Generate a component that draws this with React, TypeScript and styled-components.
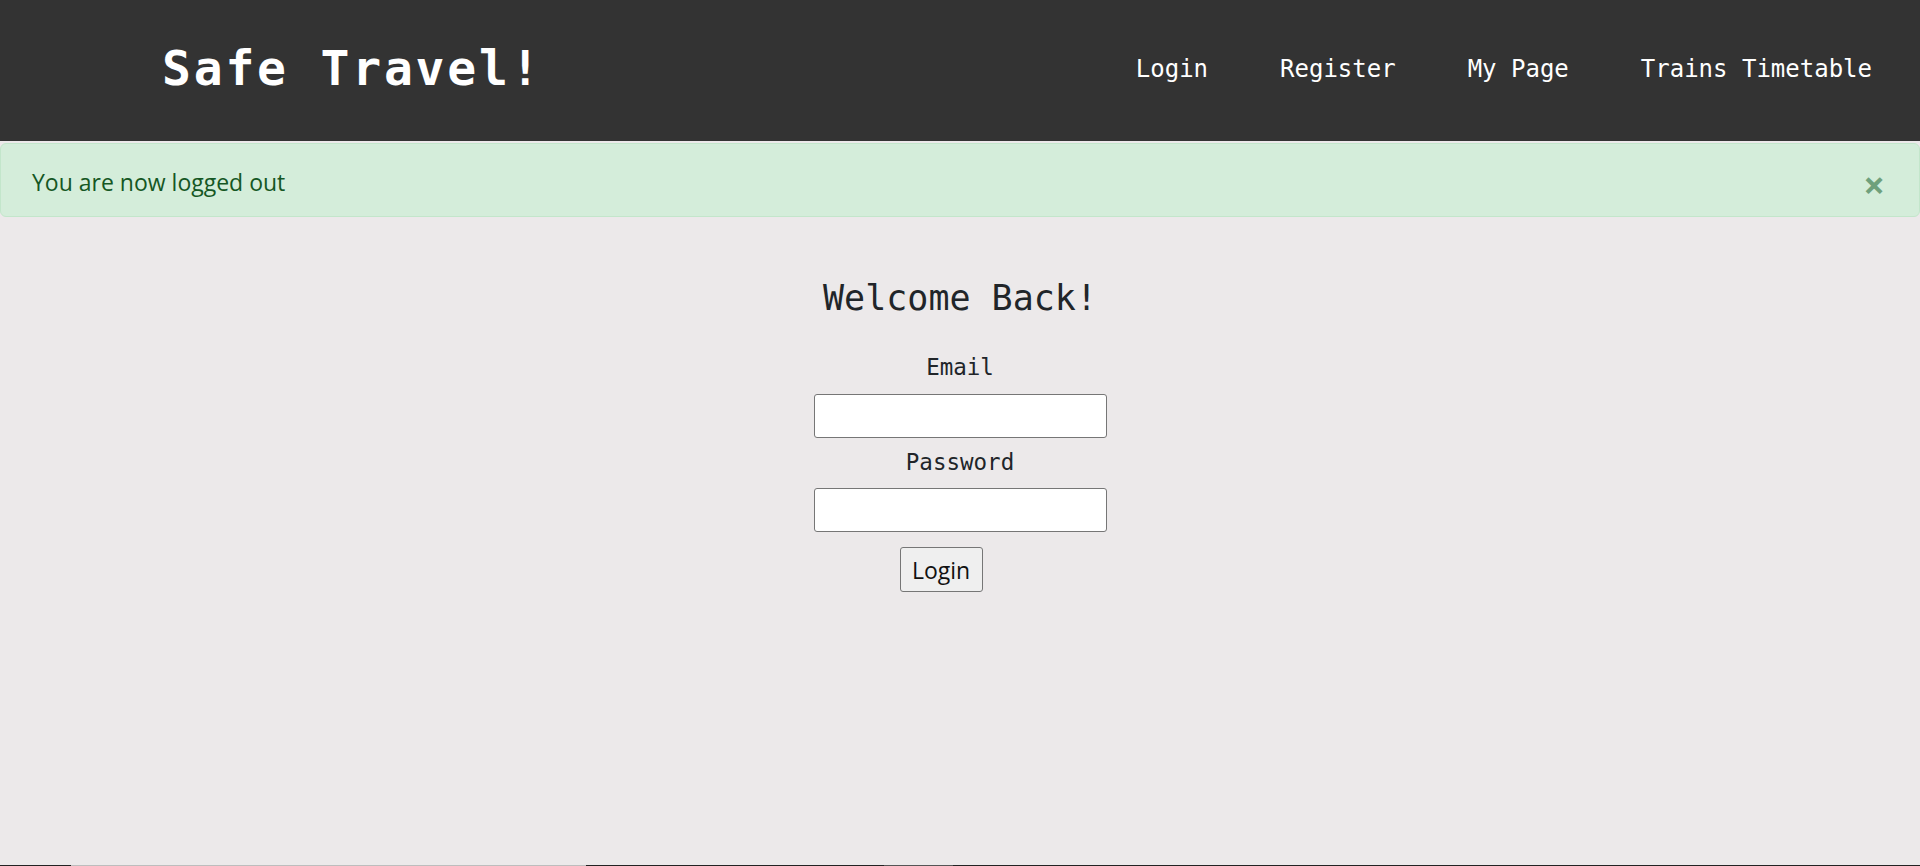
import React from "react";
import styled, { createGlobalStyle } from "styled-components";

const Global = createGlobalStyle`
  html, body { margin: 0; padding: 0; }
  body {
    background: #ecE9ea;
    font-family: "Open Sans", "Noto Sans", sans-serif;
    color: #212529;
  }
  * { box-sizing: border-box; }
`;

const Page = styled.div`
  min-height: 100vh;
  display: flex;
  flex-direction: column;
`;

const Header = styled.header`
  height: 141px;
  background: #333333;
  display: flex;
  align-items: center;
  justify-content: space-between;
  padding: 0 48px 0 162px;
`;

const Brand = styled.h1`
  margin: 0;
  font-family: "DejaVu Sans Mono", "Liberation Mono", monospace;
  font-weight: 700;
  font-size: 48px;
  letter-spacing: 2.8px;
  color: #ffffff;
  line-height: 1;
  padding-bottom: 5px;
`;

const Nav = styled.nav`
  display: flex;
  gap: 72px;
  padding-bottom: 3px;
`;

const NavLink = styled.a`
  font-family: "DejaVu Sans Mono", "Liberation Mono", monospace;
  font-size: 24px;
  color: #ffffff;
  text-decoration: none;
  line-height: 1;
`;

const Alert = styled.div`
  margin-top: 2px;
  height: 74px;
  display: flex;
  align-items: center;
  justify-content: space-between;
  padding: 4px 34px 0 31px;
  background: #d4edda;
  border: 1.5px solid #c3e6cb;
  border-radius: 6px;
  color: #155724;
  font-size: 23px;
`;

const Close = styled.button`
  border: 0;
  background: transparent;
  padding: 0;
  font-family: "Open Sans", sans-serif;
  font-size: 38px;
  font-weight: 700;
  line-height: 1;
  color: #6fa07c;
  cursor: pointer;
  margin-top: 3px;
`;

const Main = styled.main`
  flex: 1;
  display: flex;
  flex-direction: column;
  align-items: center;
  padding-top: 60px;
`;

const Title = styled.h2`
  margin: 0 0 37px 0;
  font-family: "DejaVu Sans Mono", "Liberation Mono", monospace;
  font-weight: 400;
  font-size: 35px;
  line-height: 1.2;
  color: #212529;
`;

const Form = styled.form`
  display: flex;
  flex-direction: column;
  align-items: center;
`;

const Label = styled.label`
  font-family: "DejaVu Sans Mono", "Liberation Mono", monospace;
  font-size: 22.5px;
  line-height: 1;
  color: #212529;
  margin-bottom: 15px;
`;

const Input = styled.input`
  width: 293px;
  height: 44px;
  background: #ffffff;
  border: 1.5px solid #767676;
  border-radius: 3px;
  margin-bottom: 13px;
  font-size: 20px;
`;

const Button = styled.button`
  margin-top: 2px;
  margin-right: 38px;
  width: 83px;
  height: 45px;
  background: #efefef;
  border: 1.5px solid #767676;
  border-radius: 3px;
  font-family: "Open Sans", sans-serif;
  font-size: 23px;
  color: #111;
  padding: 0;
`;

const Strip = styled.div`
  height: 1px;
  display: flex;
`;

const Seg = styled.div<{ $w: number; $c: string }>`
  width: ${(p) => p.$w}px;
  background: ${(p) => p.$c};
`;

export default function App() {
  return (
    <>
      <Global />
      <Page>
        <Header>
          <Brand>Safe Travel!</Brand>
          <Nav>
            <NavLink href="#">Login</NavLink>
            <NavLink href="#">Register</NavLink>
            <NavLink href="#">My Page</NavLink>
            <NavLink href="#">Trains Timetable</NavLink>
          </Nav>
        </Header>
        <Alert>
          <span>You are now logged out</span>
          <Close type="button" aria-label="Close">×</Close>
        </Alert>
        <Main>
          <Title>Welcome Back!</Title>
          <Form onSubmit={(e) => e.preventDefault()}>
            <Label htmlFor="email">Email</Label>
            <Input id="email" type="email" />
            <Label htmlFor="password">Password</Label>
            <Input id="password" type="password" />
            <Button type="submit">Login</Button>
          </Form>
        </Main>
        <Strip>
          <Seg $w={71} $c="#222" />
          <Seg $w={515} $c="#bdbdbd" />
          <Seg $w={298} $c="#222" />
          <Seg $w={69} $c="#555" />
          <Seg $w={967} $c="#222" />
        </Strip>
      </Page>
    </>
  );
}
